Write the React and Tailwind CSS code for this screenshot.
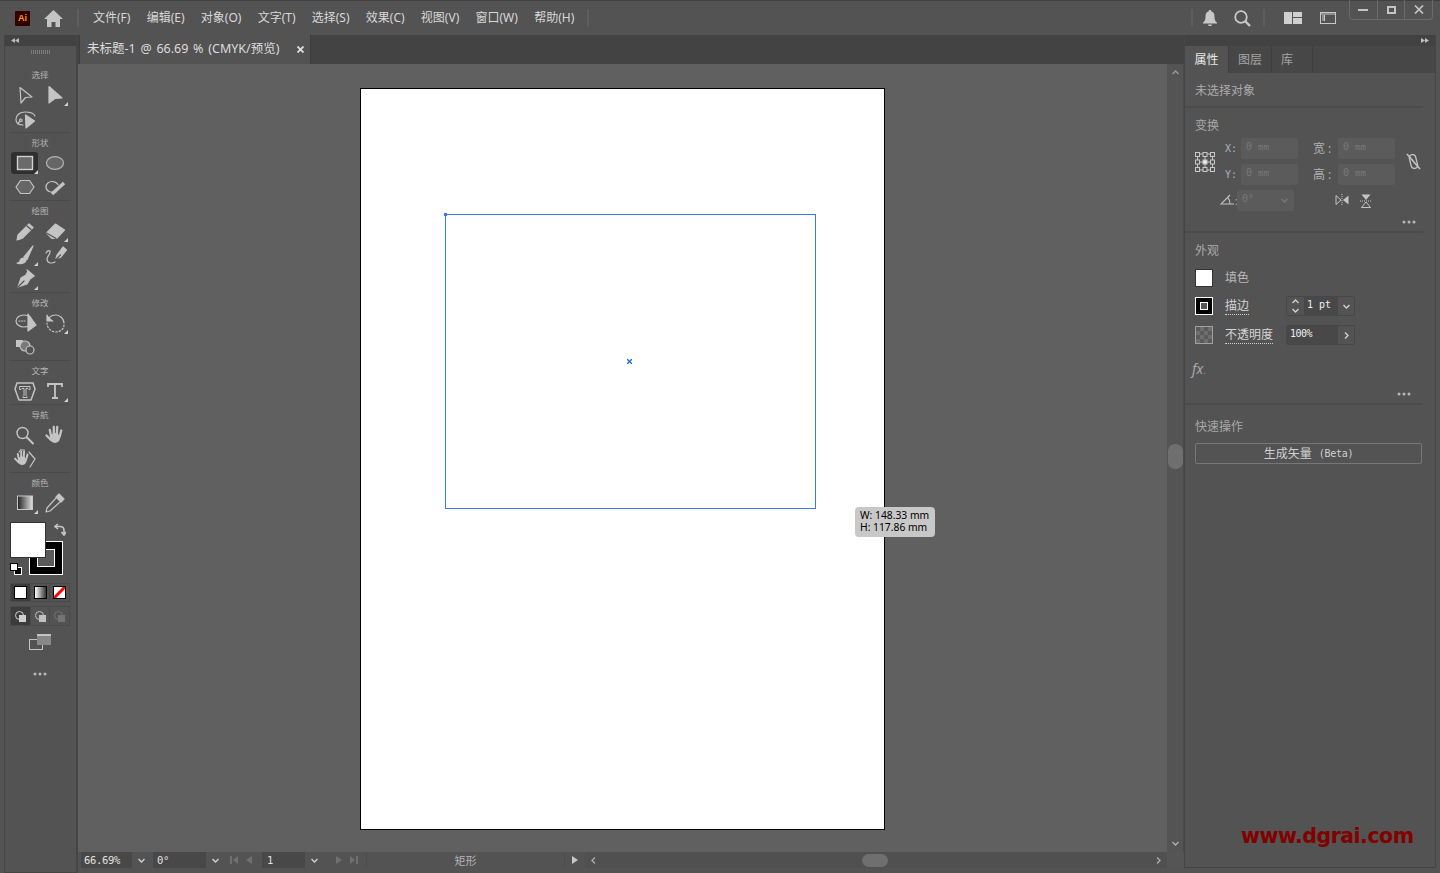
import React from "react";

const C = "#c4c4c4";
const S = ({ children, w = 24, h = 24 }) => (
  <svg width={w} height={h} viewBox={`0 0 ${w} ${h}`} fill="none" stroke={C} strokeWidth="1.2" strokeLinejoin="round" strokeLinecap="round">{children}</svg>
);

const HandShape = () => (
  <g stroke={C} strokeLinecap="round" fill="none">
    <circle cx="12" cy="15" r="5" fill={C} stroke="none" />
    <path d="M8.200 14 6.800 7M10.800 12V4M13.800 12l.4-8M16.500 14l1.800-6.500" strokeWidth="2.300" />
    <path d="M8 17 3.500 12.500" strokeWidth="2.300" />
  </g>
);

const Icons = {
  arrow: <S><path d="M7 4.500 19 14l-6.500.5L8 20Z" /></S>,
  direct: <S><path d="M6 3.500 19 15l-7 .5L6 20Z" fill={C} /></S>,
  lasso: <S><path d="M10 18c-5 0-7-2.500-7-5.500C3 8 7 5 12 5s9 1.500 10 4" /><path d="M5 17c0-2 1-2.500 3-2.500 1.500 0 1.500-2.500 0-2.500-1.500 0-2 1.500-1 2" /><path d="m12.500 8 .5 13 8.500-7Z" fill={C} /></S>,
  rect: <S><rect x="4.500" y="5.500" width="15" height="13" stroke="#d0d0d0" strokeWidth="1.400" fill="#6a6a6a" strokeLinejoin="miter" /></S>,
  ellipse: <S><ellipse cx="12" cy="12" rx="8.500" ry="6.300" fill="#666" stroke="#b4b4b4" /></S>,
  hexagon: <S><path d="M7.500 5.500h9l4.500 6.500-4.500 6.500h-9L3 12Z" fill="#666" /></S>,
  shaper: <S><path d="M13 17c-5 1-10-.5-10-5 0-3.500 3-5.500 6-5.500 3 0 5 1.500 6 3" /><path d="m9 19 12-11" strokeWidth="3.400" strokeLinecap="butt" /></S>,
  pencil: <S><path d="m5 16 11-11 4 3.500L9 19.500 4 21Z" fill={C} /><path d="m14 7 4 3.500" stroke="#535353" /></S>,
  eraser: <S><path d="m3.500 14 9-9 9 6-8 8.500H9Z" fill={C} /><path d="m3.500 14 9.500 5.500" stroke="#535353" /></S>,
  brush: <S><path d="M20 3 11 14l3 2.500Z" fill={C} /><path d="M11 15c-3 0-4 2-4 3s-1 2-3 2c2 1 8 1 9-3Z" fill={C} /></S>,
  blob: <S><path d="m14 12 6-8 3.500 3-6 7.500-4.500 1Z" fill={C} /><path d="M12 19c-4 2-8 1-8-3 0-3 4-5 3-8-1-1-3 0-4 2" /><path d="m13.500 16 4-4" stroke="#535353" /></S>,
  pen: <S><path d="m15 4 6 5-4 3-3 5-9 3 3-9 5-3Z" fill={C} /><path d="m5 20 6-6" stroke="#535353" /><path d="m14 3 7 6" /></S>,
  warp: <S><ellipse cx="11" cy="10" rx="8" ry="6" /><path d="M6 10h6" strokeDasharray="1 1.500" /><path d="M15 3v17l8-6Z" fill={C} /></S>,
  rotate: <S><path d="M5 8c2-3 5-4 8-4 4 0 8 4 8 8" /><path d="M4 4v6h6" fill={C} /><path d="M21 14c0 4-4 7-8 7-5 0-9-4-9-9" strokeDasharray="1.500 2" /></S>,
  scale: <S><rect x="3" y="5" width="7" height="7" fill={C} stroke="none" /><circle cx="12" cy="11" r="5" fill="#7a7a7a" /><circle cx="17" cy="15" r="4" fill="#535353" /></S>,
  typePath: <S><path d="M4 4h16l2 6-4 11H6L2 10Z" strokeWidth="1.500" /><path d="M7 7.500h10v3h-1l-1-1h-2v7l1 1v1H10v-1l1-1v-7H9l-1 1H7Z" strokeWidth="1" /></S>,
  type: <S><path d="M5 8V5h14v3M12 5v14M9 19h6" strokeWidth="1.800" strokeLinecap="butt" strokeLinejoin="miter" /></S>,
  zoom: <S><circle cx="9.500" cy="10" r="5.500" strokeWidth="1.400" /><path d="m14 14.500 6 6" strokeWidth="2" /></S>,
  hand: <S><HandShape /></S>,
  rotView: <S><g transform="translate(-1 1) scale(.85)"><HandShape /></g><path d="M6 5 8 2.500M9 3h2.500M16 5l6 7-5 8" /></S>,
  gradient: <svg width="24" height="24" viewBox="0 0 24 24"><defs><linearGradient id="gr"><stop offset="0" stopColor="#222" /><stop offset="1" stopColor="#e0e0e0" /></linearGradient></defs><rect x="4.500" y="5" width="15" height="13.500" fill="url(#gr)" stroke="#c8c8c8" /></svg>,
  dropper: <S><path d="m16 3 5 5-3 3-5-5Z" fill={C} /><path d="m13 7-9 10-1 4 4-1 10-9" /></S>,
};

const Corner = () => (
  <svg className="absolute right-[2px] bottom-[1px]" width="4" height="4" viewBox="0 0 4 4"><path d="M4 0v4H0Z" fill="#d0d0d0" /></svg>
);

const Tool = ({ icon, corner, active }) => (
  <div className="relative w-[30px] h-[24px] flex items-center justify-center">
    {active && <div className="absolute left-[1px] top-[1px] w-[27px] h-[22px] rounded-[3px] bg-[#2f2f2f]" />}
    <div className="relative flex">{Icons[icon]}</div>
    {corner && <Corner />}
  </div>
);

const Section = ({ title, rows, last }) => (
  <div className={`w-[60px] ml-[5px] ${last ? "" : "border-b border-[#4a4a4a]"}`}>
    <div className="h-[18px] pt-[3px] text-center text-[8.500px] leading-[14px] text-[#b6b6b6] whitespace-nowrap">{title}</div>
    <div className="flex flex-col pb-[1px]">
      {rows.map((r, i) => (
        <div key={i} className="flex">
          {r.map((t) => <Tool key={t.i} icon={t.i} corner={t.c} active={t.a} />)}
        </div>
      ))}
    </div>
  </div>
);

const Dots = ({ className = "" }) => (
  <svg className={className} width="14" height="4" viewBox="0 0 14 4"><circle cx="2" cy="2" r="1.500" fill="#b8b8b8" /><circle cx="7" cy="2" r="1.500" fill="#b8b8b8" /><circle cx="12" cy="2" r="1.500" fill="#b8b8b8" /></svg>
);

const Chev = ({ dir = "down", color = "#d0d0d0", s = 9 }) => {
  const d = { down: "M1.500 3 4.500 6 7.500 3", up: "M1.500 6 4.500 3 7.500 6", right: "M3 1.500 6 4.500 3 7.500", left: "M6 1.500 3 4.500 6 7.500" }[dir];
  return <svg width={s} height={s} viewBox="0 0 9 9" fill="none" stroke={color} strokeWidth="1.400"><path d={d} /></svg>;
};

const Sep = ({ className = "" }) => <div className={`w-[2px] h-[18px] bg-[#5e5e5e] ${className}`} />;

const menus = ["文件(F)", "编辑(E)", "对象(O)", "文字(T)", "选择(S)", "效果(C)", "视图(V)", "窗口(W)", "帮助(H)"];

function Header() {
  return (
    <div className="h-[35px] shrink-0 flex items-center relative border-t border-[#404040]">
      <div className="ml-[15px] w-[15px] h-[15px] bg-[#330000] rounded-[1px] flex items-center justify-center text-[9px] font-bold leading-none text-[#ff9a00] font-['Liberation_Sans']">Ai</div>
      <svg className="ml-[14px]" width="19" height="17" viewBox="0 0 19 17"><path d="M9.500 0 19 9h-3v8h-4.500v-5h-4v5H3V9H0Z" fill="#c4c4c4" /></svg>
      <Sep className="ml-[14px]" />
      <div className="ml-[14px] flex gap-[16.250px] text-[12px] text-[#d8d8d8] whitespace-nowrap">
        {menus.map((m) => <span key={m}>{m}</span>)}
      </div>
      <Sep className="ml-[13px]" />
      <div className="flex-1" />
      <Sep className="mr-[10px]" />
      <svg width="14" height="16" viewBox="0 0 14 16"><path d="M7 0c1 0 1.500.6 1.500 1.500C11 2.500 11.500 4 11.500 7c0 3 1 4.500 2.500 5.500v1H0v-1C1.500 11.500 2.500 10 2.500 7c0-3 .5-4.500 3-5.500C5.500.6 6 0 7 0ZM5 14.500h4c0 2-4 2-4 0Z" fill="#c8c8c8" /></svg>
      <svg className="ml-[17px]" width="17" height="17" viewBox="0 0 17 17" fill="none" stroke="#c8c8c8"><circle cx="7" cy="7" r="5.800" strokeWidth="1.800" /><path d="m11 11 5 5" strokeWidth="2.400" /></svg>
      <Sep className="ml-[12px]" />
      <svg className="ml-[19px]" width="18" height="12" viewBox="0 0 18 12"><path d="M0 0h8v12H0ZM9 0h9v5H9ZM9 6h9v6H9Z" fill="#d0d0d0" /></svg>
      <svg className="ml-[18px]" width="16" height="12" viewBox="0 0 16 12" fill="none" stroke="#c8c8c8"><rect x=".5" y=".5" width="15" height="11" /><path d="M3 3v6M4.500 3v6" /><path d="M.5 2h15" /></svg>
      <div className="ml-[13px] mr-[7px] self-start -mt-px flex w-[84px] h-[20px] border border-[#6a6a6a] border-t-0 rounded-b-[4px]">
        <div className="flex-1 flex items-center justify-center border-r border-[#6a6a6a]"><div className="w-[10px] h-[2px] bg-[#c4c4c4]" /></div>
        <div className="flex-1 flex items-center justify-center border-r border-[#6a6a6a]"><div className="w-[9px] h-[8px] border-2 border-[#c4c4c4]" /></div>
        <div className="flex-1 flex items-center justify-center">
          <svg width="10" height="9" viewBox="0 0 10 9" fill="none" stroke="#c4c4c4" strokeWidth="1.700"><path d="m1 .5 8 8M9 .5l-8 8" /></svg>
        </div>
      </div>
    </div>
  );
}

function Toolbar() {
  return (
    <div className="w-[78px] shrink-0 pl-[4px] h-full">
      <div className="h-full border-l border-r-2 border-[#454545] border-b flex flex-col">
        <div className="h-[11px] bg-[#424242] flex items-center pl-[6px]">
          <svg width="8" height="5" viewBox="0 0 8 5"><path d="M4 0v5L0 2.500ZM8 0v5L4 2.500Z" fill="#b8b8b8" /></svg>
        </div>
        <div className="h-[19px] pb-[7px] flex justify-center items-center">
          <div className="w-[20px] h-[4px] bg-[repeating-linear-gradient(90deg,#7c7c7c_0,#7c7c7c_1px,transparent_1px,transparent_2px)]" />
        </div>
        <Section title="选择" rows={[[{ i: "arrow" }, { i: "direct", c: 1 }], [{ i: "lasso" }]]} />
        <Section title="形状" rows={[[{ i: "rect", c: 1, a: 1 }, { i: "ellipse" }], [{ i: "hexagon" }, { i: "shaper" }]]} />
        <Section title="绘图" rows={[[{ i: "pencil" }, { i: "eraser", c: 1 }], [{ i: "brush", c: 1 }, { i: "blob" }], [{ i: "pen", c: 1 }]]} />
        <Section title="修改" rows={[[{ i: "warp" }, { i: "rotate", c: 1 }], [{ i: "scale" }]]} />
        <Section title="文字" rows={[[{ i: "typePath" }, { i: "type", c: 1 }]]} />
        <Section title="导航" rows={[[{ i: "zoom" }, { i: "hand" }], [{ i: "rotView" }]]} />
        <Section last title="颜色" rows={[[{ i: "gradient", c: 1 }, { i: "dropper" }]]} />

        <div className="relative ml-[5px] mt-[6px] h-[55px] w-[60px]">
          <div className="absolute left-[19px] top-[19px] w-[34px] h-[34px] bg-black border border-white flex items-center justify-center">
            <div className="w-[18px] h-[18px] border border-white bg-[#5a5a5a]" />
          </div>
          <div className="absolute left-0 top-0 w-[36px] h-[36px] bg-white border border-[#333]" />
          <svg className="absolute left-[44px] top-[1px]" width="12" height="13" viewBox="0 0 12 13" fill="none" stroke="#c8c8c8" strokeWidth="1.600"><path d="M4 1 1 3.500 4 6" /><path d="M1 3.500h5c3 0 4 2 4 4V12" /><path d="m7.500 9 2.500 3 2-3" /></svg>
          <div className="absolute left-0 top-[41px] w-[12px] h-[12px]">
            <div className="absolute left-[4px] top-[4px] w-[8px] h-[8px] bg-black border border-white" />
            <div className="absolute left-0 top-0 w-[8px] h-[8px] bg-white border border-black" />
          </div>
        </div>

        <div className="ml-[5px] mt-[6px] w-[60px] h-[19px] flex border border-[#4a4a4a]">
          <div className="w-[20px] bg-[#3c3c3c] flex items-center justify-center"><div className="w-[13px] h-[13px] bg-white border border-black" /></div>
          <div className="w-[20px] flex items-center justify-center border-x border-[#4a4a4a]"><div className="w-[13px] h-[13px] border border-black bg-[linear-gradient(90deg,#fff,#333)]" /></div>
          <div className="w-[20px] flex items-center justify-center">
            <svg width="13" height="13" viewBox="0 0 13 13"><rect width="13" height="13" fill="#fff" /><path d="M0 13 13 0" stroke="#f00" strokeWidth="3" /><rect x=".5" y=".5" width="12" height="12" fill="none" stroke="#000" /></svg>
          </div>
        </div>

        <div className="ml-[5px] mt-[4px] w-[60px] h-[20px] flex border border-[#4a4a4a]">
          {[["#3c3c3c", "#d0d0d0"], ["transparent", "#c0c0c0"], ["transparent", "#747474"]].map(([bg, col], i) => (
            <div key={i} className={`w-[20px] flex items-center justify-center ${i === 1 ? "border-x border-[#4a4a4a]" : ""}`} style={{ background: bg }}>
              <svg width="11" height="11" viewBox="0 0 11 11" fill="none" stroke={col}><circle cx="4.500" cy="4.500" r="4" /><rect x="4.500" y="4.500" width="6" height="6" fill={col} /></svg>
            </div>
          ))}
        </div>

        <div className="ml-[5px] w-[60px] mt-[8px] flex justify-center">
          <svg width="22" height="16" viewBox="0 0 22 16"><rect x=".5" y="5.500" width="13" height="10" fill="none" stroke="#c4c4c4" /><rect x="8" y="0" width="14" height="11" fill="#888" /><rect x="8" y="0" width="14" height="2" fill="#c4c4c4" /></svg>
        </div>
        <div className="ml-[5px] w-[60px] mt-[22px] flex justify-center"><Dots /></div>
      </div>
    </div>
  );
}

function Canvas() {
  return (
    <div className="relative flex-1 bg-[#606060] overflow-hidden">
      <div className="absolute left-[282px] top-[24px] w-[525px] h-[742px] bg-white border border-black">
        <div className="absolute left-[84px] top-[125px] w-[371px] h-[295px] border border-[#3a7be0]" />
        <div className="absolute left-[83px] top-[124px] w-[3px] h-[3px] bg-[#3a7be0]" />
        <svg className="absolute left-[266px] top-[270px]" width="5" height="5" viewBox="0 0 5 5" stroke="#1f66e8" strokeWidth="1.300"><path d="m0 0 5 5M5 0 0 5" /></svg>
        <div className="absolute left-[494px] top-[418px] w-[80px] h-[30px] rounded-[4px] bg-[#c8c8c8] pl-[5px] pt-[2px] text-[10.300px] leading-[12px] text-black font-['Noto_Sans'] whitespace-nowrap">
          <div>W: 148.33 mm</div>
          <div>H: 117.86 mm</div>
        </div>
      </div>
    </div>
  );
}

const NavArrows = ({ flip }) => (
  <svg width="28" height="10" viewBox="0 0 28 10" fill="#707070" style={flip ? { transform: "scaleX(-1)" } : undefined}>
    <rect x="1" y="1" width="2" height="8" /><path d="M9 1v8L4 5ZM23 1v8l-6-4Z" />
  </svg>
);

const Field = ({ w, pl = 3, children }) => (
  <div className="h-[16px] bg-[#484848] text-[10.500px] leading-[16px] text-[#e2e2e2] font-['DejaVu_Sans_Mono'] tracking-[-0.3px] whitespace-nowrap overflow-hidden" style={{ width: w, paddingLeft: pl }}>{children}</div>
);
const Drop = () => <div className="w-[19px] h-[16px] flex items-center justify-center border-l border-[#484848]"><Chev /></div>;

function StatusBar() {
  return (
    <div className="h-[16px] shrink-0 flex bg-[#535353]">
      <div className="flex flex-1 items-stretch">
        <div className="ml-[3px]"><Field w={50}>66.69%</Field></div>
        <Drop />
        <div className="ml-[3px]"><Field w={52} pl={4}>0°</Field></div>
        <Drop />
        <div className="w-[38px] flex items-center justify-center"><NavArrows /></div>
        <Field w={42} pl={5}>1</Field>
        <Drop />
        <div className="w-[43px] flex items-center justify-center"><NavArrows flip /></div>
        <div className="w-[198px] text-center text-[11px] leading-[17px] text-[#b4b4b4] border-l border-[#4c4c4c]">矩形</div>
        <div className="w-[21px] flex items-center justify-center border-l border-[#4c4c4c]">
          <svg width="6" height="8" viewBox="0 0 6 8"><path d="M0 0v8l6-4Z" fill="#c8c8c8" /></svg>
        </div>
        <div className="flex-1 flex items-center justify-between bg-[#505050] px-[4px]">
          <Chev dir="left" color="#aaa" />
          <div className="w-[26px] h-[13px] rounded-full bg-[#6f6f6f] mr-[3px]" />
          <Chev dir="right" color="#aaa" />
        </div>
      </div>
      <div className="w-[17px] bg-[#555555]" />
    </div>
  );
}

function VScroll() {
  return (
    <div className="w-[17px] shrink-0 bg-[#545454] flex flex-col items-center justify-between py-[4px] border-r border-[#4a4a4a]">
      <Chev dir="up" color="#9a9a9a" />
      <div className="w-[15px] h-[25px] rounded-[7px] bg-[#6f6f6f] -mt-[3px]" />
      <Chev color="#b0b0b0" />
    </div>
  );
}

const Div = () => <div className="w-[238px] h-[2px] bg-[#4b4b4b]" />;
const Title = ({ children, className = "" }) => <div className={`pl-[10px] text-[12px] leading-[14px] text-[#a8a8a8] ${className}`}>{children}</div>;

const DimField = ({ w = 57, val = "0", unit = "mm", chev }) => (
  <div className="h-[21px] rounded-[2px] bg-[#5b5b5b] pl-[5px] pr-[5px] flex justify-between font-['DejaVu_Sans_Mono'] text-[10px] leading-[17px] text-[#797979] whitespace-nowrap" style={{ width: w }}>
    <span>{val}{unit && <span className="ml-[6px] text-[9px]">{unit}</span>}</span>
    {chev && <span className="mt-[6px]"><Chev color="#777" /></span>}
  </div>
);

const Underlined = ({ children }) => <span className="border-b border-dotted border-[#d0d0d0] leading-[13px]">{children}</span>;

function RightPanel() {
  return (
    <div className="w-[256px] shrink-0 pr-[4px] pb-[5px] h-full">
      <div className="h-full border-l border-r border-b border-[#454545] flex flex-col">
        <div className="h-[11px] bg-[#424242] flex items-center justify-end pr-[6px] shrink-0">
          <svg width="8" height="5" viewBox="0 0 8 5"><path d="M0 0v5l4-2.500ZM4 0v5l4-2.500Z" fill="#c0c0c0" /></svg>
        </div>
        <div className="h-[27px] shrink-0 bg-[#474747] flex text-[12px] leading-[28px]">
          <div className="w-[44px] bg-[#535353] text-center text-[#e8e8e8] border-r border-[#3e3e3e]">属性</div>
          <div className="w-[43px] text-center text-[#a4a4a4] border-r border-[#3e3e3e]">图层</div>
          <div className="w-[41px] pl-[9px] text-[#a4a4a4] border-r border-[#3e3e3e]">库</div>
        </div>
        <div className="h-[33px] shrink-0 pl-[10px] pt-[11px] text-[12px] leading-[14px] text-[#ababab]">未选择对象</div>
        <Div />
        <div className="h-[123px] shrink-0">
          <Title className="pt-[11px]">变换</Title>
          <div className="flex mt-[5px] pl-[10px]">
            <svg className="mt-[14px]" width="20" height="20" viewBox="0 0 20 20" fill="none" stroke="#c8c8c8">
              <path d="M5 2h3M12 2h3M5 10h3M12 10h3M5 18h3M12 18h3M2.500 5v3M2.500 12v3M10 5v3M10 12v3M17.500 5v3M17.500 12v3" />
              {[0, 7.500, 15].flatMap((y) => [0, 7.500, 15].map((x) => (
                <rect key={`${x}-${y}`} x={x + 0.5} y={y + 0.5} width="4" height="4" fill={x === 7.5 && y === 7.5 ? "#eee" : "none"} />
              )))}
            </svg>
            <div className="ml-[10px] w-[170px]">
              <div className="flex items-center text-[12px] text-[#b0b0b0]">
                <span className="w-[16px] font-['DejaVu_Sans_Mono'] text-[10px] text-[#a8b4c0]">X:</span><DimField />
                <span className="ml-[15px] w-[25px] whitespace-nowrap">宽 :</span><DimField />
              </div>
              <div className="flex items-center mt-[5px] text-[12px] text-[#b0b0b0]">
                <span className="w-[16px] font-['DejaVu_Sans_Mono'] text-[10px] text-[#a8b4c0]">Y:</span><DimField />
                <span className="ml-[15px] w-[25px] whitespace-nowrap">高 :</span><DimField />
              </div>
              <div className="flex items-center mt-[5px] -ml-[5px]">
                <svg width="15" height="13" viewBox="0 0 15 13" fill="none" stroke="#c4c4c4" strokeWidth="1.100"><path d="M14 10H1L10 1M8 4c1.500 1.500 2 3.500 2 6" /></svg>
                <span className="w-[2px] text-[10px] text-[#b0b0b0] leading-none">:</span>
                <DimField val="0°" unit="" chev />
                <div className="ml-[41px] flex gap-[11px]">
                  <svg width="14" height="12" viewBox="0 0 14 12"><path d="M1 1.500 6 6l-5 4.500Z" fill="none" stroke="#c4c4c4" /><path d="M13.500 1.500v9L8 6Z" fill="#c4c4c4" /><path d="M7 0v12" stroke="#c4c4c4" strokeDasharray="1 1" /></svg>
                  <svg width="12" height="14" viewBox="0 0 12 14"><path d="M1.500.5h9L6 6Z" fill="#c4c4c4" /><path d="M1.500 13.500 6 8l4.500 5.500Z" fill="none" stroke="#c4c4c4" /><path d="M0 7h12" stroke="#c4c4c4" strokeDasharray="1 1" /></svg>
                </div>
              </div>
            </div>
            <svg className="ml-[11px] mt-[15px]" width="15" height="17" viewBox="0 0 15 17" fill="none" stroke="#c4c4c4" strokeWidth="1.300"><rect x="4.200" y="1.500" width="6.500" height="14" rx="3.200" transform="rotate(-14 7.500 8.500)" /><path d="M1 1 14 16" strokeWidth="1.600" /></svg>
          </div>
          <div className="flex justify-end pr-[19px] mt-[9px]"><Dots /></div>
        </div>
        <Div />
        <div className="h-[170px] shrink-0 relative">
          <Title className="pt-[11px]">外观</Title>
          <div className="flex items-center h-[18px] mt-[11px] pl-[10px]">
            <div className="w-[18px] h-[18px] bg-white border border-[#333]" />
            <span className="ml-[12px] text-[12px] text-[#b8b8b8]">填色</span>
          </div>
          <div className="flex items-center h-[20px] mt-[9px] pl-[10px]">
            <div className="w-[18px] h-[18px] bg-black border border-white flex items-center justify-center"><div className="w-[8px] h-[8px] border border-white bg-[#555]" /></div>
            <span className="ml-[12px] w-[61px] text-[12px] text-[#d4d4d4]"><Underlined>描边</Underlined></span>
            <div className="flex w-[69px] h-[20px] border border-[#474747] rounded-[2px] bg-[#4c4c4c]">
              <div className="w-[18px] flex flex-col items-center justify-center border-r border-[#474747] bg-[#535353]"><Chev dir="up" /><Chev /></div>
              <div className="w-[32px] pl-[2px] bg-[#484848] text-[10px] leading-[16px] text-[#eee] font-['DejaVu_Sans_Mono'] whitespace-nowrap">1 pt</div>
              <div className="flex-1 flex items-center justify-center border-l border-[#474747] bg-[#535353]"><Chev /></div>
            </div>
          </div>
          <div className="flex items-center h-[20px] mt-[9px] pl-[10px]">
            <div className="w-[18px] h-[18px] border border-[#a0a0a0] bg-[repeating-conic-gradient(#6e6e6e_0_25%,#5a5a5a_0_50%)] bg-[length:8px_8px]" />
            <span className="ml-[12px] w-[61px] text-[12px] text-[#d4d4d4] whitespace-nowrap"><Underlined>不透明度</Underlined></span>
            <div className="flex w-[69px] h-[20px] border border-[#474747] rounded-[2px]">
              <div className="w-[50px] pl-[3px] bg-[#484848] text-[10px] leading-[15px] text-[#eee] font-['DejaVu_Sans_Mono'] tracking-[-0.5px]">100%</div>
              <div className="flex-1 flex items-center justify-center border-l border-[#474747]"><Chev dir="right" /></div>
            </div>
          </div>
          <div className="pl-[7px] mt-[16px] text-[14px] leading-[16px] italic text-[#a8a8a8] font-['Noto_Sans']">fx<span className="not-italic text-[9px]">.</span></div>
          <div className="absolute left-[212px] top-[159px]"><Dots /></div>
        </div>
        <Div />
        <div className="flex-1">
          <Title className="pt-[15px]">快速操作</Title>
          <div className="ml-[10px] mt-[9px] w-[227px] h-[21px] border border-[#777] rounded-[2px] flex items-center justify-center text-[12px] text-[#d0d0d0] whitespace-nowrap">
            生成矢量<span className="ml-[7px] font-['DejaVu_Sans_Mono'] text-[10px] tracking-[-0.3px]">(Beta)</span>
          </div>
        </div>
        <div className="h-[44px] shrink-0 pl-[56px] text-[20.500px] leading-[26px] font-bold text-[#820000] font-['DejaVu_Sans'] tracking-[-0.5px] whitespace-nowrap">www.dgrai.com</div>
      </div>
    </div>
  );
}

export default function App() {
  return (
    <div className="w-[1440px] h-[873px] overflow-hidden bg-[#535353] flex flex-col font-['Noto_Sans','Noto_Sans_CJK_SC',sans-serif]">
      <Header />
      <div className="flex-1 flex min-h-0">
        <Toolbar />
        <div className="w-[1106px] shrink-0 flex flex-col pb-[5px]">
          <div className="h-[29px] shrink-0 bg-[#434343] flex pl-[1px]">
            <div className="w-[232px] h-[29px] bg-[#535353] flex items-center pl-[7px] pr-[6px] justify-between border-x border-[#3c3c3c] text-[12.500px] text-[#dcdcdc] whitespace-nowrap [word-spacing:1.500px]">
              <span>未标题-1 @ 66.69 % (CMYK/预览)</span>
              <svg width="7" height="7" viewBox="0 0 7 7" stroke="#e0e0e0" strokeWidth="1.800"><path d="m.5.5 6 6M6.500.5l-6 6" /></svg>
            </div>
          </div>
          <div className="flex-1 flex min-h-0">
            <Canvas />
            <VScroll />
          </div>
          <StatusBar />
        </div>
        <RightPanel />
      </div>
    </div>
  );
}
